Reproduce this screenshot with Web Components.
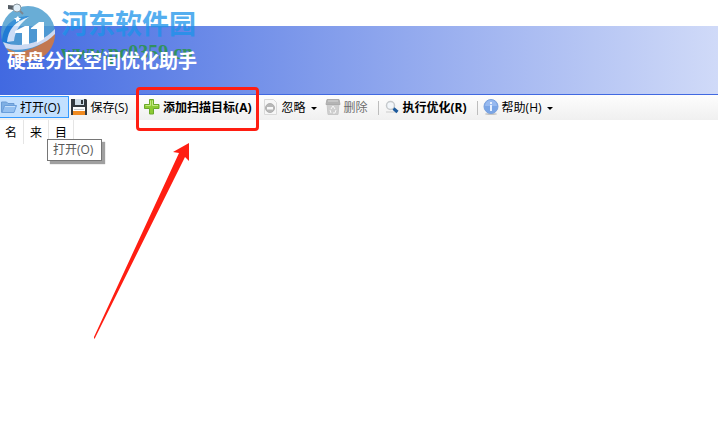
<!DOCTYPE html>
<html lang="zh-CN">
<head>
<meta charset="utf-8">
<title>硬盘分区空间优化助手</title>
<style>
    body {
        margin: 0;
        background: #fff;
        color: #000;
        font: 12px/18px "Open Sans", "Noto Sans CJK SC", sans-serif;
    }
</style>
</head>
<body>
<disk-window></disk-window>

<template id="icons">
    <svg data-name="folder" viewBox="0 0 16 16">
        <path d="M.5 13.500V3h5L7 4.500h6V7" fill="#7fb0e4" stroke="#6a9bd4"/>
        <path d="M1 13.500L3.500 6.500h12l-2.500 7z" fill="#94c0f0" stroke="#6a9fdc"/>
        <path d="M4 7.500h10" stroke="#c6e0fa"/>
    </svg>
    <svg data-name="disk" viewBox="0 0 16 16">
        <path d="M0 0h15l1 1v15H0z" fill="#33393e"/>
        <path d="M4 0h9v6H4z" fill="#cfdde8"/>
        <path d="M10 1h2v4h-2z" fill="#30363b"/>
        <path d="M2 8h12v5H2z" fill="#fff"/>
        <path d="M3 10.500h10" stroke="#c3c9cc"/>
        <path d="M2 12h12v4H2z" fill="#f08a20"/>
    </svg>
    <svg data-name="plus" viewBox="0 0 16 16">
        <path d="M5.500 .5h4v5h5.500v4H9.500v5.500h-4V9.500H.5v-4h5z" fill="#8ccb35" stroke="#6aa82a"/>
        <path d="M6.500 1.500v5h-5M8.500 1.500v5H14" fill="none" stroke="#c5e986"/>
    </svg>
    <svg data-name="ignore" viewBox="0 0 16 16">
        <path d="M1.500 .5h9l3 3v12h-12z" fill="#f7f7f7" stroke="#dadada"/>
        <circle cx="7" cy="9" r="4.500" fill="#b8b8b8" stroke="#b0b0b0"/>
        <path d="M4 8h6v2.500H4z" fill="#f8f8f8"/>
    </svg>
    <svg data-name="trash" viewBox="0 0 16 16">
        <path d="M2 5h12l-1 10.500H3z" fill="#cfcfcf" stroke="#c8c8c8"/>
        <path d="M2 .5h12l1 5H1z" fill="#b4b4b4" stroke="#acacac"/>
        <path d="M3 2h10" stroke="#d8d8d8"/>
        <path d="M6 10l2-3 2 3M11 11l-1 3H8M5 11l1 3" fill="none" stroke="#f8f8f8"/>
    </svg>
    <svg data-name="search" viewBox="0 0 16 16">
        <path d="M2 13h11" stroke="#e0e0e0" stroke-width="2"/>
        <circle cx="6.500" cy="6.500" r="4" fill="#f2f6fa" stroke="#c6cacd" stroke-width="1.500"/>
        <path d="M9.500 9.500l4 3.500" stroke="#1c5a9c" stroke-width="3"/>
    </svg>
    <svg data-name="info" viewBox="0 0 16 16">
        <ellipse cx="8" cy="15" rx="6" ry="1" fill="#c4c4c4"/>
        <circle cx="8" cy="7.500" r="7" fill="#7ba6e6" stroke="#7ba2de"/>
        <path d="M2 7a6 6 0 0 1 12 0z" fill="#98baf0"/>
        <path d="M7 6h2v6H7zM7 3h2v2H7z" fill="#e8f1ff"/>
    </svg>
</template>

<template id="tool-button">
    <style>
        :host { display: flex; flex: none; }
        button {
            display: flex;
            align-items: center;
            gap: 3px;
            height: 22px;
            padding: 0 8px 0 1px;
            border: 1px solid transparent;
            background: none;
            color: inherit;
            font: inherit;
            white-space: nowrap;
        }
        svg { width: 16px; height: 16px; flex: none; }
        span { padding-top: 2px; }
        :host([active]) button { border-color: #3399ff; border-left: 0; background: #c2e0ff; }
        :host([strong]) button { font-weight: 700; }
        :host([disabled]) button { color: #6d6d6d; }
        :host([menu]) button { padding-right: 5px; }
        :host([menu]) button::after {
            content: "";
            margin: 2px 0 0 2px;
            border: 3px solid transparent;
            border-top-color: #000;
            border-bottom: 0;
        }
    </style>
    <button type="button"><span><slot></slot></span></button>
</template>

<template id="app-banner">
    <style>
        :host {
            display: flex;
            align-items: center;
            height: 66px;
            padding: 2px 0 0 7px;
            border-bottom: 1px solid #4169e1;
            background: linear-gradient(90deg, #4169e1, #d0daf8);
        }
        /* keeps the title above the translucent site mark */
        h1 { position: relative; z-index: 1; margin: 0; color: #fff; font-size: 19px; line-height: 24px; }
    </style>
    <h1><slot></slot></h1>
</template>

<template id="site-mark">
    <style>
        :host { position: absolute; left: 0; top: 0; display: flex; gap: 4px; pointer-events: none; }
        svg { width: 57px; height: 64px; }
        div { padding-top: 6px; white-space: nowrap; }
        b { display: block; }
        .name { color: #1b93ea; font-size: 27px; line-height: 36px; opacity: .75; }
        .site { color: #229632; font: bold 20px/20px "Liberation Serif", serif; opacity: .75; }
    </style>
    <svg viewBox="0 0 57 64">
        <g opacity=".85">
            <circle cx="28" cy="33" r="27" fill="#4f9fd0"/>
            <path d="M55 32A27 27 0 0 1 10 54C28 52 44 45 55 32z" fill="#d87a38"/>
            <path d="M6 48A27 27 0 0 0 40 57C30 56 18 54 6 48z" fill="#e08a3c"/>
            <path d="M2 41C3 24 15 16 29 16L14 29l-6 14 12 4C12 48 5 46 2 41z" fill="#1a7fd2"/>
            <path d="M7 42c1-12 8-21 22-25C20 23 15 31 14 41z" fill="#e4f1fb"/>
            <path d="M3 42C20 49 42 43 55 29L55 34C43 47 20 53 6 48z" fill="#e4ecf5"/>
        </g>
        <path d="M15 31l10-5h4v18l-7 1V33h-7zM31 28l8-6h5v17l-7 4V29h-6z" fill="#fff"/>
        <path d="M18 16l1 2h2l-2 2 1 2-2-1-2 1v-2l-2-2h2z" fill="#fff"/>
        <path d="M8 5l11 1v5L8 9z" fill="#555d65"/>
        <circle cx="17" cy="8" r="4" fill="#e0eef8" stroke="#8b979f"/>
        <path d="M20 11l3 3" stroke="#7c8790" stroke-width="2"/>
    </svg>
    <div><b class="name">河东软件园</b><b class="site">www.pc0359.cn</b></div>
</template>

<template id="disk-window">
    <style>
        :host { display: block; position: relative; min-height: 100vh; overflow: hidden; }
        .caption { height: 26px; }
        nav {
            display: flex;
            align-items: flex-start;
            height: 24px;
            padding-top: 1px;
            background: linear-gradient(#fdfdfd, #f0f0f0);
        }
        hr { flex: none; width: 1px; height: 14px; margin: 5px 3px 0 1px; border: 0; background: #bdbdbd; }
        table { border-spacing: 0; }
        th {
            box-sizing: border-box;
            width: 25px;
            height: 24px;
            padding: 1px 0 0 6px;
            border-right: 1px solid #e5e5e5;
            font-weight: 400;
            text-align: left;
        }
        th:first-child { width: 24px; padding-left: 5px; }
        .tip {
            position: absolute;
            left: 47px;
            top: 139px;
            padding: 1px 8px 1px 5px;
            border: 1px solid #767676;
            background: #fff;
            box-shadow: 3px 3px 1px #a0a0a0;
            color: #575757;
        }
        .frame {
            position: absolute;
            left: 136px;
            top: 87px;
            width: 117px;
            height: 38px;
            border: 3px solid #ff1e12;
            border-radius: 4px;
        }
        .arrow { position: absolute; left: 93px; top: 142px; width: 98px; height: 198px; }
    </style>
    <div class="caption"></div>
    <app-banner>硬盘分区空间优化助手</app-banner>
    <nav>
        <tool-button icon="folder" active>打开(O)</tool-button>
        <tool-button icon="disk">保存(S)</tool-button>
        <hr>
        <tool-button icon="plus" strong>添加扫描目标(A)</tool-button>
        <tool-button icon="ignore" menu>忽略</tool-button>
        <tool-button icon="trash" disabled>删除</tool-button>
        <hr>
        <tool-button icon="search" strong>执行优化(R)</tool-button>
        <hr>
        <tool-button icon="info" menu>帮助(H)</tool-button>
    </nav>
    <table>
        <thead><tr><th>名</th><th>来</th><th>目</th></tr></thead>
    </table>
    <site-mark></site-mark>
    <div class="tip" role="tooltip">打开(O)</div>
    <div class="frame"></div>
    <svg class="arrow" viewBox="0 0 98 198"><path d="M96 1L80 10l6 1L1 195v2l1-1L92 15l4 4z" fill="#ff1e12"/></svg>
</template>

<script>
    const template = id => document.getElementById(id).content;

    class TemplateElement extends HTMLElement {
        constructor() {
            super();
            this.attachShadow({ mode: "open" });
            this.shadowRoot.append(template(this.localName).cloneNode(true));
        }
    }

    customElements.define("tool-button", class extends TemplateElement {
        connectedCallback() {
            const button = this.shadowRoot.querySelector("button");
            const icon = template("icons").querySelector(`[data-name="${this.getAttribute("icon")}"]`);
            button.prepend(icon.cloneNode(true));
            button.disabled = this.hasAttribute("disabled");
        }
    });
    customElements.define("app-banner", class extends TemplateElement {});
    customElements.define("site-mark", class extends TemplateElement {});
    customElements.define("disk-window", class extends TemplateElement {});
</script>
</body>
</html>
